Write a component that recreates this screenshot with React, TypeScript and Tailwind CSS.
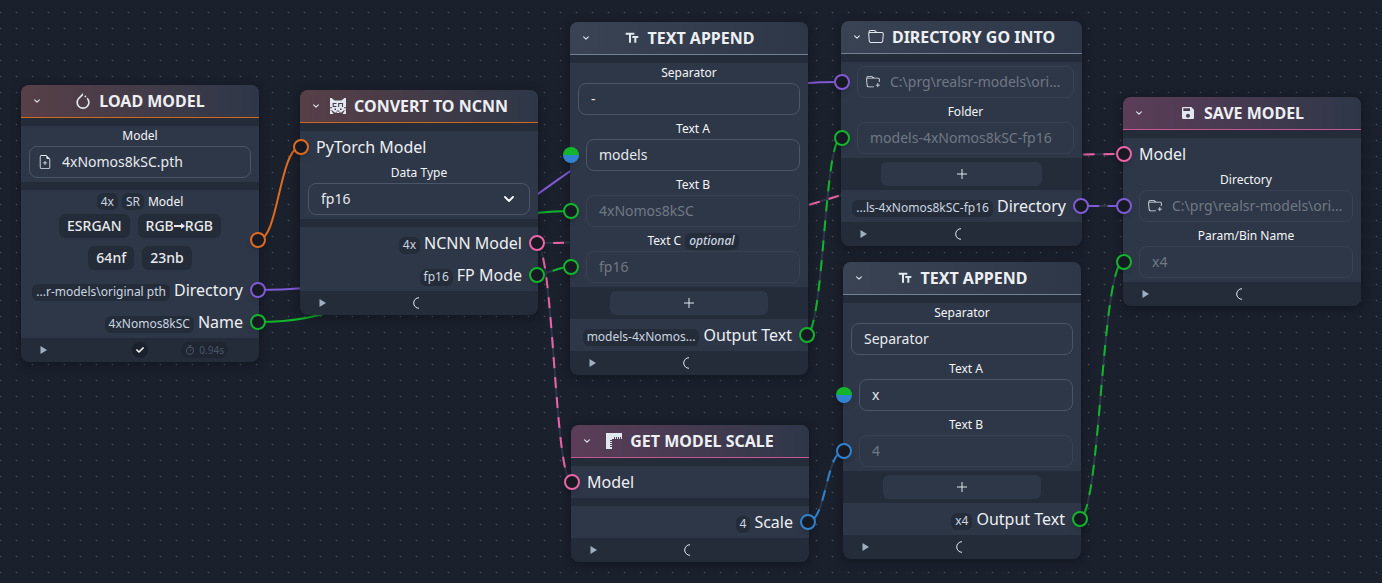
import React, { type ReactNode } from "react";
import { BsFileEarmarkPlus, BsFolder, BsFolderPlus } from "react-icons/bs";
import { MdSave, MdTextFields } from "react-icons/md";
import { FaCheck } from "react-icons/fa";
import { SiPytorch } from "react-icons/si";

type Kind = "orange" | "purple" | "green" | "pink" | "blue";

const ring: Record<Kind, string> = {
  orange: "border-[#dd6b20]",
  purple: "border-[#805ad5]",
  green: "border-[#12b52c]",
  pink: "border-[#ed64a6]",
  blue: "border-[#3182ce]",
};

const stroke: Record<Kind, string> = {
  orange: "#dd6b20",
  purple: "#805ad5",
  green: "#12b52c",
  pink: "#ed64a6",
  blue: "#3182ce",
};

function Handle({ kind, side }: { kind: Kind; side: "left" | "right" }) {
  return (
    <span
      className={`absolute top-1/2 size-4 -translate-y-1/2 rounded-full border-2 bg-[#171923] shadow-md ${ring[kind]} ${
        side === "left" ? "-left-[7px]" : "-right-[7px]"
      }`}
    />
  );
}

function SplitHandle() {
  return (
    <span className="absolute top-1/2 -left-[7px] size-4 -translate-y-1/2 rounded-full bg-linear-to-b from-[#12b52c] from-50% to-[#3182ce] to-50% shadow-md" />
  );
}

function Tag({ children, italic = false }: { children: ReactNode; italic?: boolean }) {
  return (
    <span
      className={`flex h-[17px] items-center rounded-md bg-[#242c39] px-1 text-xs whitespace-nowrap text-[#cbd5e0] ${
        italic ? "font-medium italic" : ""
      }`}
    >
      {children}
    </span>
  );
}

function BigTag({ children }: { children: ReactNode }) {
  return (
    <span className="flex h-6 items-center rounded-md bg-[#242c39] px-2 text-sm font-medium text-[#e8eaed]">
      {children}
    </span>
  );
}

function Arrow() {
  return (
    <svg className="h-2 w-[11px]" viewBox="0 0 11 8" fill="none" stroke="currentColor" strokeWidth="2">
      <path d="M0 4h8" />
      <path d="M7 1l4 3-4 3z" fill="currentColor" stroke="none" />
    </svg>
  );
}

function Chevron({ className }: { className: string }) {
  return (
    <svg className={className} viewBox="0 0 10 6" fill="none" stroke="currentColor" strokeWidth="1.8" strokeLinecap="round" strokeLinejoin="round">
      <path d="M1 1l4 4 4-4" />
    </svg>
  );
}

function NcnnIcon() {
  return (
    <svg className="size-4" viewBox="0 0 16 16">
      <path d="M0 0h1.500l3.200 2.500h6.600L14.500 0H16v12.500h-2.500l-2 2h-1.500l-1-2H7l-1 2H4.500l-2-2H0z" fill="#e2e8f0" />
      <path d="M0 12.800h1.500l2 3.200H0zM16 12.800h-1.500l-2 3.200H16zM6 13.500h4L9 15H7z" fill="#e2e8f0" />
      <path d="M6.500 5.500H3.200v3h3.300M8.700 9V5.500h3.800V9" fill="none" stroke="#4a3c46" strokeWidth="1.100" />
      <path d="M0 9.200h2v1H0zM14 9.200h2v1h-2zM4.500 10.500h1.500v1.500H4.500zM10 10.500h1.500v1.500H10z" fill="#4a3c46" />
    </svg>
  );
}

function RulerIcon() {
  return (
    <svg className="size-4" viewBox="0 0 16 16" fill="#e2e8f0">
      <path d="M0 0h16v6h-1V4h-1v2h-1V4h-1v2h-1V4h-1v2H9V4H8v2H6v1H4v1h2v1H4v1h2v1H4v1h2v1H4v1h2v2H0z" />
    </svg>
  );
}

function Stopwatch() {
  return (
    <svg className="size-2.5" viewBox="0 0 10 10" fill="none" stroke="currentColor">
      <circle cx="5" cy="5.800" r="3.600" />
      <path d="M3.500.7h3M5 .7v1.500M5 6l1.300-1.500M8 2.200l.8.800" />
    </svg>
  );
}

type Tone = "rust" | "slate" | "rose";

const headTone: Record<Tone, string> = {
  rust: "from-[#583f47] border-[#cf6920]",
  slate: "from-[#3a4353] border-[#718096]",
  rose: "from-[#5c3d58] border-[#c55690]",
};

function Node({
  place,
  title,
  icon,
  tone,
  status,
  children,
}: {
  place: string;
  title: string;
  icon: ReactNode;
  tone: Tone;
  status?: ReactNode;
  children: ReactNode;
}) {
  return (
    <section className={`absolute rounded-lg bg-[#242c39] shadow-[0_2px_10px_rgba(10,12,20,0.5)] ${place}`}>
      <header
        className={`flex h-[33px] items-center rounded-t-lg border-b bg-linear-to-r to-[#2d3748] pr-5 pl-3 ${headTone[tone]}`}
      >
        <button type="button" aria-label={`Collapse ${title}`} className="flex w-2 justify-center text-[#e2e8f0]">
          <Chevron className="h-1 w-1.5" />
        </button>
        <div className="flex flex-1 items-center justify-center gap-2 text-[#e2e8f0]">
          {icon}
          <h2 className="text-base leading-8 font-bold whitespace-nowrap text-[#edeff2]">{title}</h2>
        </div>
      </header>
      {children}
      <footer className="grid h-6 grid-cols-3 items-center px-[19px]">
        <button type="button" aria-label={`Run ${title}`} className="justify-self-start text-[#a0aec0]">
          <svg className="h-2 w-[7px]" viewBox="0 0 7 8" fill="currentColor">
            <path d="M.5 0L7 4 .5 8z" />
          </svg>
        </button>
        {status ?? (
          <svg className="size-3 justify-self-center" viewBox="0 0 12 12" fill="none" stroke="#e2e8f0">
            <path d="M6 .7A5.300 5.300 0 0 0 6 11.300" />
          </svg>
        )}
      </footer>
    </section>
  );
}

function Panel({ children, flush = false }: { children: ReactNode; flush?: boolean }) {
  return <div className={`bg-[#2d3748] ${flush ? "" : "mt-2"}`}>{children}</div>;
}

function Field({
  id,
  label,
  value,
  handle,
  icon,
  linked = false,
  optional = false,
  hideLabel = false,
}: {
  id: string;
  label: string;
  value: string;
  handle?: ReactNode;
  icon?: ReactNode;
  linked?: boolean;
  optional?: boolean;
  hideLabel?: boolean;
}) {
  return (
    <div className={`pb-1 ${hideLabel ? "pt-1" : ""}`}>
      {!hideLabel && (
        <div className={`flex h-5 items-center justify-center gap-1 pr-2 ${handle ? "pl-4" : "pl-2"}`}>
          <label htmlFor={id} className="text-xs leading-5 text-[#f4f5f7]">
            {label}
          </label>
          {optional && <Tag italic>optional</Tag>}
        </div>
      )}
      <div className={`relative pr-2 ${handle ? "pl-4" : "pl-2"}`}>
        {handle}
        <div
          className={`flex h-8 items-center gap-2.5 rounded-lg border ${icon ? "px-2" : "px-3"} ${
            linked ? "border-[#374151]" : "border-[#4a5568]"
          }`}
        >
          {icon}
          <input
            id={id}
            aria-label={hideLabel ? label : undefined}
            defaultValue={value}
            readOnly={linked}
            className={`w-full min-w-0 bg-transparent text-sm text-ellipsis outline-none ${
              linked ? "text-[#717884]" : "text-[#e8eaed]"
            }`}
          />
        </div>
      </div>
    </div>
  );
}

function InputRow({ kind, label }: { kind: Kind; label: string }) {
  return (
    <div className="relative flex h-8 items-center pl-4 text-base text-[#edeff2]">
      <Handle kind={kind} side="left" />
      {label}
    </div>
  );
}

function OutputRow({ kind, label, tag }: { kind: Kind; label: string; tag: string }) {
  return (
    <div className="relative flex h-8 items-center justify-end gap-1 pr-4 text-base whitespace-nowrap text-[#edeff2]">
      <span className="pt-1">
        <Tag>{tag}</Tag>
      </span>
      {label}
      <Handle kind={kind} side="right" />
    </div>
  );
}

function AddRow() {
  return (
    <div className="flex h-8 items-center justify-center">
      <button type="button" aria-label="Add input" className="flex h-6 w-2/3 items-center justify-center rounded-md bg-[#2d3748] text-[#e2e8f0]">
        <svg className="size-2.5" viewBox="0 0 10 10" stroke="currentColor">
          <path d="M5 0v10M0 5h10" />
        </svg>
      </button>
    </div>
  );
}

const edges: { kind: Kind; d: string; phase?: number }[] = [
  { kind: "orange", d: "M258 240C279 240 279 147 301 147" },
  { kind: "purple", d: "M258 290C549 290 549 82 841 82" },
  { kind: "green", d: "M258 322C414 322 414 211 571 211" },
  { kind: "pink", d: "M536 243C830 243 830 154 1124 154", phase: 3 },
  { kind: "pink", d: "M536 243C554 243 554 482 572 482", phase: 3 },
  { kind: "green", d: "M536 274C554 274 554 267 571 267", phase: 3 },
  { kind: "green", d: "M806 335C824 335 824 138 841 138", phase: 13 },
  { kind: "blue", d: "M808 522C826 522 826 451 844 451", phase: 13 },
  { kind: "green", d: "M1079 519C1101 519 1101 261 1124 261", phase: 13 },
  { kind: "purple", d: "M1081 206C1102 206 1102 206 1124 206", phase: 13 },
];

function Edges() {
  return (
    <svg className="absolute inset-0 size-full" fill="none" strokeWidth="2" aria-hidden="true">
      <defs>
        <pattern id="dots" x="-8" y="4" width="16" height="16" patternUnits="userSpaceOnUse">
          <circle cx="8.5" cy="8.5" r="0.8" fill="#4b505b" />
        </pattern>
      </defs>
      <rect width="100%" height="100%" fill="url(#dots)" />
      {edges.map((e) => (
        <g key={e.d}>
          {e.phase !== undefined && <path d={e.d} stroke="#2d3748" />}
          <path
            d={e.d}
            stroke={stroke[e.kind]}
            strokeDasharray={e.phase === undefined ? undefined : "11 9"}
            strokeDashoffset={e.phase}
          />
        </g>
      ))}
    </svg>
  );
}

export default function App() {
  return (
    <main className="relative h-screen overflow-hidden bg-[#1a202c] font-['Noto_Sans',sans-serif]">
      <Edges />

      <Node
        place="left-[21px] top-[85px] w-[238px]"
        title="LOAD MODEL"
        icon={<SiPytorch className="size-4" />}
        tone="rust"
        status={
          <>
            <span className="flex size-4 items-center justify-center justify-self-center rounded-full bg-[#1a202c] text-white">
              <FaCheck className="size-2" />
            </span>
            <span className="mr-3 flex h-4 items-center gap-1 justify-self-end rounded-full bg-[#1f2632] px-1 text-[10px] text-[#4a5568]">
              <Stopwatch />
              0.94s
            </span>
          </>
        }
      >
        <Panel>
          <Field id="load-file" label="Model" value="4xNomos8kSC.pth" icon={<BsFileEarmarkPlus className="size-3.5 shrink-0 text-[#e2e8f0]" />} />
        </Panel>
        <Panel>
          <div className="flex h-5 items-end justify-center gap-1 text-xs leading-[17px] text-[#f4f5f7]">
            <Tag>4x</Tag>
            <Tag>SR</Tag>
            Model
          </div>
          <div className="relative mb-1 flex flex-wrap justify-center gap-2 px-8 pt-1">
            <BigTag>ESRGAN</BigTag>
            <BigTag>
              RGB
              <Arrow />
              RGB
            </BigTag>
            <BigTag>64nf</BigTag>
            <BigTag>23nb</BigTag>
            <Handle kind="orange" side="right" />
          </div>
          <OutputRow kind="purple" label="Directory" tag="...r-models\original pth" />
          <OutputRow kind="green" label="Name" tag="4xNomos8kSC" />
        </Panel>
      </Node>

      <Node place="left-[300px] top-[90px] w-[238px]" title="CONVERT TO NCNN" icon={<NcnnIcon />} tone="rust">
        <Panel>
          <InputRow kind="orange" label="PyTorch Model" />
          <div className="px-2 pb-1">
            <label htmlFor="data-type" className="block h-5 text-center text-xs leading-5 text-[#f4f5f7]">
              Data Type
            </label>
            <div className="relative">
              <select id="data-type" className="h-8 w-full appearance-none rounded-lg border border-[#4a5568] bg-transparent px-3 text-sm text-[#e8eaed]">
                <option>fp16</option>
              </select>
              <Chevron className="pointer-events-none absolute top-[13px] right-4 h-1.5 w-2.5 text-white" />
            </div>
          </div>
        </Panel>
        <Panel>
          <OutputRow kind="pink" label="NCNN Model" tag="4x" />
          <OutputRow kind="green" label="FP Mode" tag="fp16" />
        </Panel>
      </Node>

      <Node place="left-[570px] top-[22px] w-[238px]" title="TEXT APPEND" icon={<MdTextFields className="size-4" />} tone="slate">
        <Panel>
          <Field id="a-sep" label="Separator" value="-" />
          <Field id="a-text-a" label="Text A" value="models" handle={<SplitHandle />} />
          <Field id="a-text-b" label="Text B" value="4xNomos8kSC" linked handle={<Handle kind="green" side="left" />} />
          <Field id="a-text-c" label="Text C" value="fp16" linked optional handle={<Handle kind="green" side="left" />} />
        </Panel>
        <AddRow />
        <Panel flush>
          <OutputRow kind="green" label="Output Text" tag="models-4xNomos..." />
        </Panel>
      </Node>

      <Node place="left-[841px] top-[21px] w-[241px]" title="DIRECTORY GO INTO" icon={<BsFolder className="size-4" />} tone="slate">
        <Panel>
          <Field
            id="dir"
            label="Directory"
            value="C:\prg\realsr-models\original pth"
            linked
            hideLabel
            icon={<BsFolderPlus className="size-3.5 shrink-0 text-[#e2e8f0]" />}
            handle={<Handle kind="purple" side="left" />}
          />
          <Field id="folder" label="Folder" value="models-4xNomos8kSC-fp16" linked handle={<Handle kind="green" side="left" />} />
        </Panel>
        <AddRow />
        <Panel flush>
          <OutputRow kind="purple" label="Directory" tag="...ls-4xNomos8kSC-fp16" />
        </Panel>
      </Node>

      <Node place="left-[843px] top-[262px] w-[238px]" title="TEXT APPEND" icon={<MdTextFields className="size-4" />} tone="slate">
        <Panel>
          <Field id="b-sep" label="Separator" value="Separator" />
          <Field id="b-text-a" label="Text A" value="x" handle={<SplitHandle />} />
          <Field id="b-text-b" label="Text B" value="4" linked handle={<Handle kind="blue" side="left" />} />
        </Panel>
        <AddRow />
        <Panel flush>
          <OutputRow kind="green" label="Output Text" tag="x4" />
        </Panel>
      </Node>

      <Node place="left-[571px] top-[425px] w-[238px]" title="GET MODEL SCALE" icon={<RulerIcon />} tone="rose">
        <Panel>
          <InputRow kind="pink" label="Model" />
        </Panel>
        <Panel>
          <OutputRow kind="blue" label="Scale" tag="4" />
        </Panel>
      </Node>

      <Node place="left-[1123px] top-[97px] w-[238px]" title="SAVE MODEL" icon={<MdSave className="size-4" />} tone="rose">
        <Panel>
          <InputRow kind="pink" label="Model" />
          <Field
            id="save-dir"
            label="Directory"
            value="C:\prg\realsr-models\original pth"
            linked
            icon={<BsFolderPlus className="size-3.5 shrink-0 text-[#e2e8f0]" />}
            handle={<Handle kind="purple" side="left" />}
          />
          <Field id="param-name" label="Param/Bin Name" value="x4" linked handle={<Handle kind="green" side="left" />} />
        </Panel>
      </Node>
    </main>
  );
}
